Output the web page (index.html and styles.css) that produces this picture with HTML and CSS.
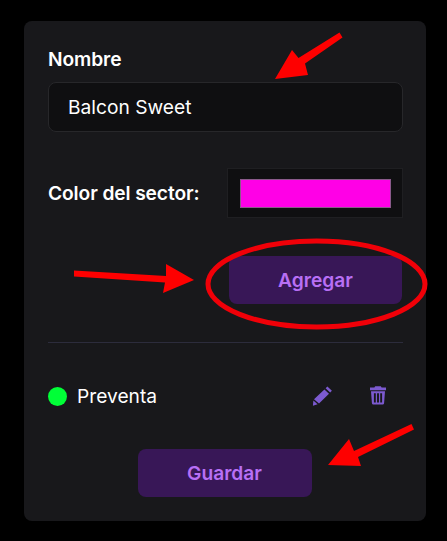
FILE: index.html
```html
<!DOCTYPE html>
<html lang="es">
<head>
<meta charset="utf-8">
<title>Sector</title>
<link rel="stylesheet" href="styles.css">
</head>
<body>
<main class="card">
  <label class="label">Nombre</label>
  <div class="input">Balcon Sweet</div>
  <div class="color-row">
    <span class="label">Color del sector:</span>
    <div class="picker"><div class="swatch"></div></div>
  </div>
  <div class="add-row"><button class="btn">Agregar</button></div>
  <hr class="divider">
  <div class="item">
    <span class="dot"></span>
    <span class="item-name">Preventa</span>
    <span class="actions">
      <svg class="icon" viewBox="0 0 20 20" width="20" height="20"><path d="M15.4 0.4 19.9 4.7 18.2 6.6 13.600 2.200Z M12.4 3.4 17 7.800 7 17.400 2 13.200Z M1.4 14.600 5.600 18.300 0.900 19.800Z"/></svg>
      <svg class="icon" viewBox="0 0 16 20" width="16" height="20"><path fill-rule="evenodd" d="M5.2 0.2h5.600l.8 1.300H16v2.700H0V1.500h4.400Z M1 5.200h14l-.9 11.900c-.1 1-.8 1.500-1.800 1.500H3.700c-1 0-1.700-.5-1.800-1.500Z M3.900 7.200v9.400h1.900V7.200Z M7.050 7.200v9.400h1.900V7.200Z M10.200 7.200v9.400h1.900V7.200Z"/></svg>
    </span>
  </div>
  <div class="save-row"><button class="btn save">Guardar</button></div>
</main>
<svg class="marks" viewBox="0 0 447 541" width="447" height="541">
  <g fill="#fe0000">
    <path d="M339.5 32.5 342.5 37.5 305 63.5 308 75 275 79 292 50 298.5 58Z"/>
    <path d="M74 270.5 166 276 166 264 194 280 163 293 165 282.500 74 276.500Z"/>
    <path d="M411.500 424 414 429.500 358 457 361 466 328 465 349 439 354 451Z"/>
  </g>
  <ellipse class="ring" cx="316.500" cy="284" rx="108.500" ry="43"/>
</svg>
</body>
</html>
```
FILE: styles.css
```css
* { box-sizing: border-box; }
html, body { margin: 0; height: 541px; overflow: hidden; }
body {
  background: #000;
  padding: 21px 21px 0 24px;
  font-family: Inter, "Liberation Sans", sans-serif;
  color: #fff;
  position: relative;
}
.card {
  width: 402px;
  height: 500px;
  background: #18181b;
  border-radius: 8px;
  padding: 26px 23px 24px 24px;
  display: flex;
  flex-direction: column;
}
.label {
  font-size: 19.2px;
  font-weight: 600;
  line-height: 24px;
  letter-spacing: -0.1px;
}
.input {
  margin-top: 11px;
  height: 50px;
  background: #0f0f11;
  border: 1px solid #27272a;
  border-radius: 8px;
  padding-left: 19px;
  font-size: 19.2px;
  line-height: 48px;
}
.color-row {
  margin-top: 36px;
  display: flex;
  align-items: center;
  justify-content: space-between;
}
.picker {
  width: 176px;
  height: 50px;
  background: #0f0f11;
  border: 1px solid #1f1f22;
  padding: 10px 11px 10px 12px;
}
.swatch {
  height: 29px;
  background: #ff00e6;
  border: 1px solid #8a5a8a;
}
.add-row {
  margin-top: 38px;
  display: flex;
  justify-content: flex-end;
  padding-right: 1px;
}
.btn {
  width: 173px;
  height: 48px;
  border: 0;
  border-radius: 8px;
  background: #381757;
  color: #b86ff5;
  font-family: inherit;
  font-size: 19.2px;
  font-weight: 600;
  padding: 0;
}
.save { width: 174px; margin-right: 2px; }
.divider {
  margin: 38px 0 0;
  border: 0;
  height: 1px;
  background: #2c2c3c;
}
.item {
  margin-top: 33px;
  height: 40px;
  display: flex;
  align-items: center;
}
.dot {
  width: 19px;
  height: 19px;
  border-radius: 50%;
  background: #00ff37;
}
.item-name {
  margin-left: 10px;
  font-size: 19.2px;
  flex: 1;
}
.actions {
  display: flex;
  align-items: center;
  gap: 38px;
  padding-right: 17px;
}
.icon { fill: #7c5ad0; display: block; }
.save-row {
  margin-top: 33px;
  display: flex;
  justify-content: center;
}
.marks {
  position: absolute;
  left: 0;
  top: 0;
  pointer-events: none;
}
.ring {
  fill: none;
  stroke: #f00008;
  stroke-width: 5;
}
```
